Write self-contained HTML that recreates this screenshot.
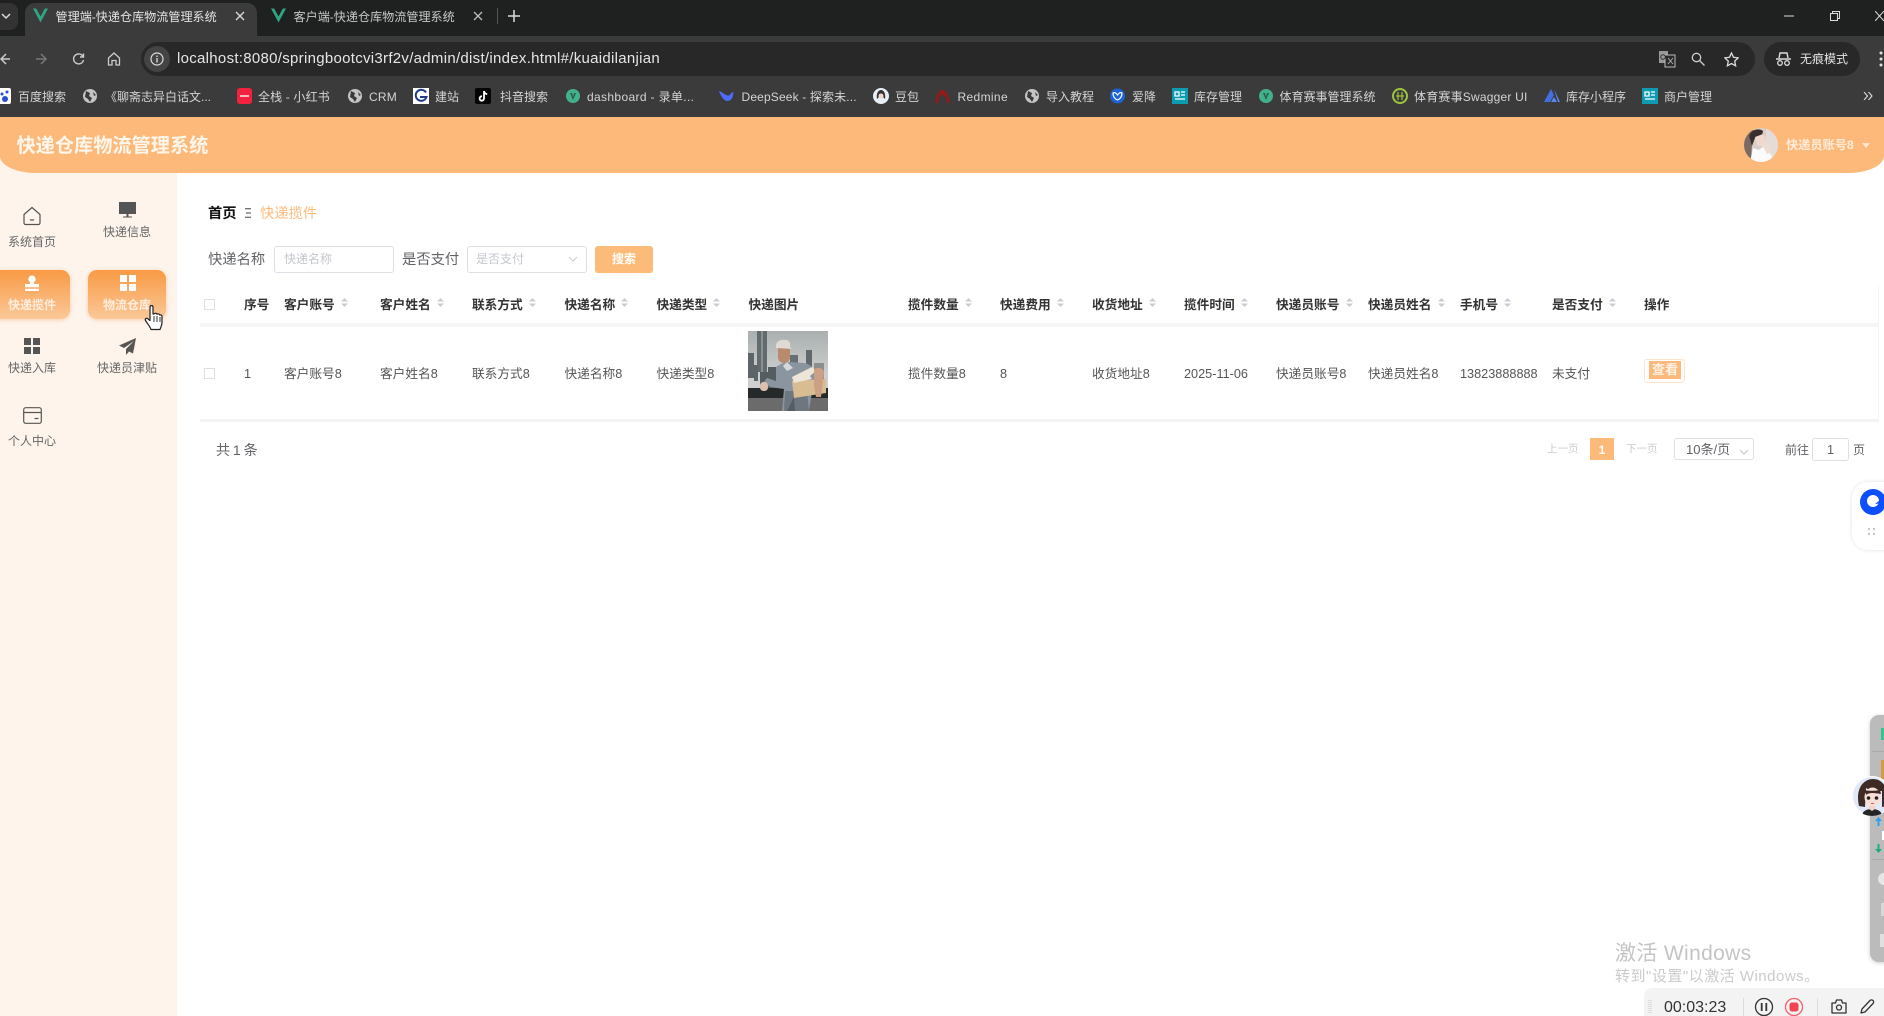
<!DOCTYPE html>
<html lang="zh"><head><meta charset="utf-8"><title>快递仓库物流管理系统</title>
<style>
html,body{margin:0;padding:0;width:1884px;height:1016px;overflow:hidden;background:#fff}
body{position:relative;font-family:"Liberation Sans","Noto Sans CJK SC",sans-serif;color:#606266}
#w{position:absolute;left:0;top:0;width:1884px;height:1016px;overflow:hidden;filter:blur(.3px)}
.a,.t,svg{position:absolute}
.t{white-space:nowrap;line-height:20px;height:20px}
.c{text-align:center}
.bm{font-size:12px;color:#d4d4d4;top:86.500px}
.tb{font-size:12.700px;font-weight:700;color:#333;top:294.500px}
.td{font-size:12.700px;color:#555;top:363.500px}
.nav{font-size:12px;color:#666;width:90px;text-align:center}
.act{background:linear-gradient(180deg,#f89a44,#fbc898);border-radius:9px;box-shadow:0 1px 4px rgba(245,160,90,.45)}
.box{background:#fff;border:1px solid #dcdfe6;border-radius:3px;box-sizing:border-box}
.cb{width:11px;height:11px;border:1px solid #dcdfe6;box-sizing:border-box;background:#fff}
</style></head><body><div id="w">

<!-- browser chrome -->
<div class="a" style="left:0;top:0;width:1884px;height:36px;background:#1f2020"></div>
<div class="a" style="left:0;top:36px;width:1884px;height:81px;background:#3b3b3b"></div>
<div class="a" style="left:0;top:3px;width:18px;height:27px;background:#333;border-radius:0 8px 8px 0"></div>
<svg style="left:1px;top:12px" width="10" height="8" viewBox="0 0 10 8"><path d="M1 2l4 4 4-4" fill="none" stroke="#ddd" stroke-width="1.5"/></svg>
<div class="a" style="left:25px;top:3px;width:232px;height:33px;background:#3b3b3b;border-radius:10px 10px 0 0"></div>
<svg style="left:33px;top:8px" width="15" height="15" viewBox="0 0 16 15"><path d="M0 0h3.400L8 8.500 12.600 0H16L8 15z" fill="#2fa583"/></svg>
<div class="t" style="left:55.500px;top:7px;font-size:12.100px;color:#e4e4e4">管理端-快递仓库物流管理系统</div>
<svg style="left:235px;top:11px" width="10" height="10" viewBox="0 0 10 10"><path d="M1 1l8 8M9 1l-8 8" stroke="#ddd" stroke-width="1.300"/></svg>
<svg style="left:271px;top:8px" width="15" height="15" viewBox="0 0 16 15"><path d="M0 0h3.400L8 8.500 12.600 0H16L8 15z" fill="#2fa583"/></svg>
<div class="t" style="left:293.500px;top:7px;font-size:12.100px;color:#c8c8c8">客户端-快递仓库物流管理系统</div>
<svg style="left:473px;top:11px" width="10" height="10" viewBox="0 0 10 10"><path d="M1 1l8 8M9 1l-8 8" stroke="#bbb" stroke-width="1.300"/></svg>
<div class="a" style="left:497px;top:8px;width:1px;height:16px;background:#555"></div>
<svg style="left:508px;top:10px" width="12" height="12" viewBox="0 0 12 12"><path d="M6 0v12M0 6h12" stroke="#ddd" stroke-width="1.500"/></svg>
<svg style="left:1784px;top:15px" width="10" height="2"><path d="M0 1h10" stroke="#ddd"/></svg>
<svg style="left:1830px;top:11px" width="10" height="10" viewBox="0 0 10 10"><path d="M.5 2.500h7v7h-7zM2.500 2.500v-2h7v7h-2" fill="none" stroke="#ddd"/></svg>
<svg style="left:1875px;top:11px" width="9" height="10" viewBox="0 0 9 10"><path d="M0 0l9 10M9 0L0 10" stroke="#ddd"/></svg>

<!-- toolbar -->
<svg style="left:0;top:52px" width="12" height="14" viewBox="0 0 12 14"><path d="M10 7H1M6 2L1 7l5 5" fill="none" stroke="#ccc" stroke-width="1.500"/></svg>
<svg style="left:36px;top:52px" width="12" height="14" viewBox="0 0 12 14"><path d="M0 7h10M5 2l5 5-5 5" fill="none" stroke="#777" stroke-width="1.500"/></svg>
<svg style="left:71.500px;top:52px" width="13" height="14" viewBox="0 0 13 14"><path d="M11 4.500A5 5 0 1 0 11.500 8M11.500 1.500v3.500H8" fill="none" stroke="#ccc" stroke-width="1.400"/></svg>
<svg style="left:107px;top:52px" width="14" height="14" viewBox="0 0 14 14"><path d="M1.500 6L7 1l5.500 5v7H9V8.500H5V13H1.500z" fill="none" stroke="#ccc" stroke-width="1.300"/></svg>
<div class="a" style="left:141px;top:42px;width:1614px;height:34px;background:#282828;border-radius:17px"></div>
<div class="a" style="left:144px;top:46px;width:26px;height:26px;background:#444;border-radius:50%"></div>
<svg style="left:150px;top:52px" width="14" height="14" viewBox="0 0 14 14"><circle cx="7" cy="7" r="6" fill="none" stroke="#ddd" stroke-width="1.200"/><path d="M7 6v4.500M7 3.500v1.500" stroke="#ddd" stroke-width="1.300"/></svg>
<div class="t" style="left:177px;top:48px;font-size:15px;letter-spacing:.29px;line-height:22px;height:22px;color:#e6e6e6">localhost:8080/springbootcvi3rf2v/admin/dist/index.html#/kuaidilanjian</div>
<svg style="left:1659px;top:50px" width="17" height="18" viewBox="0 0 17 18"><path d="M0 1h9v12H0z" fill="#999"/><path d="M6 5h10v12H6z" fill="#2a2a2a" stroke="#bbb"/><path d="M9 8l5 6M14 8l-5 6" stroke="#bbb" stroke-width=".8"/><circle cx="4" cy="7" r="2.300" fill="none" stroke="#333"/></svg>
<svg style="left:1691px;top:52px" width="14" height="14" viewBox="0 0 14 14"><circle cx="5.500" cy="5.500" r="4.200" fill="none" stroke="#ccc" stroke-width="1.300"/><path d="M8.500 8.500l5 5" stroke="#ccc" stroke-width="1.300"/></svg>
<svg style="left:1724px;top:52px" width="15" height="15" viewBox="0 0 15 15"><path d="M7.500 1l2 4.300 4.700.6-3.500 3.200.9 4.700-4.100-2.300-4.100 2.300.9-4.700L.8 5.900l4.700-.6z" fill="none" stroke="#ddd" stroke-width="1.300"/></svg>
<div class="a" style="left:1764px;top:42px;width:96px;height:34px;background:#282828;border-radius:17px"></div>
<svg style="left:1776px;top:52px" width="15" height="14" viewBox="0 0 15 14"><path d="M0 7h15M3 6l1-5h7l1 5" fill="none" stroke="#ddd" stroke-width="1.400"/><circle cx="4" cy="11" r="2.300" fill="none" stroke="#ddd" stroke-width="1.300"/><circle cx="11" cy="11" r="2.300" fill="none" stroke="#ddd" stroke-width="1.300"/></svg>
<div class="t" style="left:1800px;top:49px;font-size:12px;color:#e4e4e4">无痕模式</div>
<svg style="left:1879px;top:51px" width="5" height="16" viewBox="0 0 5 16"><circle cx="2" cy="2" r="1.500" fill="#ddd"/><circle cx="2" cy="8" r="1.500" fill="#ddd"/><circle cx="2" cy="14" r="1.500" fill="#ddd"/></svg>

<!-- bookmarks -->
<svg style="left:0;top:88px" width="11" height="16" viewBox="0 0 11 16"><rect x="-5" width="16" height="16" rx="2" fill="#fff"/><circle cx="5" cy="11" r="3" fill="#2b4fd0"/><circle cx="2" cy="6" r="1.500" fill="#2b4fd0"/><circle cx="7" cy="4" r="1.500" fill="#2b4fd0"/></svg>
<div class="t bm" style="left:18px">百度搜索</div>
<svg style="left:83px;top:89px" width="14" height="14" viewBox="0 0 14 14"><circle cx="7" cy="7" r="7" fill="#c4c4c4"/><path d="M3 2l4 2-1 3 3 2-2 4-2-3-3-2zM10 3l3 3-2 1z" fill="#3b3b3b"/></svg>
<div class="t bm" style="left:105px">《聊斋志异白话文...</div>
<div class="a" style="left:237px;top:88px;width:15px;height:16px;background:#f2213f;border-radius:3px"></div>
<div class="a" style="left:240px;top:95px;width:9px;height:2px;background:#f9b9c3"></div>
<div class="t bm" style="left:258px;letter-spacing:.15px">全栈 - 小红书</div>
<svg style="left:348px;top:89px" width="14" height="14" viewBox="0 0 14 14"><circle cx="7" cy="7" r="7" fill="#c4c4c4"/><path d="M3 2l4 2-1 3 3 2-2 4-2-3-3-2zM10 3l3 3-2 1z" fill="#3b3b3b"/></svg>
<div class="t bm" style="left:369px;letter-spacing:.2px">CRM</div>
<svg style="left:413px;top:88px" width="16" height="16" viewBox="0 0 16 16"><rect width="16" height="16" fill="#fff"/><path d="M13 4.500A5.500 5.500 0 1 0 13.500 9H7" fill="none" stroke="#223a8a" stroke-width="2"/></svg>
<div class="t bm" style="left:435px">建站</div>
<svg style="left:475px;top:88px" width="16" height="16" viewBox="0 0 16 16"><rect width="16" height="16" rx="2" fill="#050505"/><path d="M9 3v7.500a2.200 2.200 0 1 1-2-2.200M9 3c.4 2 1.500 3 3.200 3.200" fill="none" stroke="#fff" stroke-width="1.800"/></svg>
<div class="t bm" style="left:500px">抖音搜索</div>
<svg style="left:566px;top:89px" width="14" height="14" viewBox="0 0 14 14"><circle cx="7" cy="7" r="7" fill="#42b08b"/><path d="M4 4h2l1 4 1-4h2l-3 7z" fill="#2d5c4d"/></svg>
<div class="t bm" style="left:587px;letter-spacing:.35px">dashboard - 录单...</div>
<svg style="left:719px;top:89px" width="15" height="14" viewBox="0 0 15 14"><path d="M0 2c2 5 4 9 8 10 4 0 6-3 6-7l1-2-3 1C11 7 9 7 7 6 5 5 3 3 0 2z" fill="#4d6bfe"/><circle cx="10" cy="5" r="1" fill="#3b3b3b"/></svg>
<div class="t bm" style="left:741.500px;letter-spacing:.15px">DeepSeek - 探索未...</div>
<svg style="left:873px;top:88px" width="16" height="16" viewBox="0 0 16 16"><circle cx="8" cy="8" r="8" fill="#e8eef7"/><path d="M4 11c-1-5 1-9 4-9s5 4 4 9l-2-2V6H6v3z" fill="#333"/><circle cx="8" cy="8" r="2.500" fill="#f4d6c6"/></svg>
<div class="t bm" style="left:895px">豆包</div>
<svg style="left:934px;top:89px" width="17" height="14" viewBox="0 0 17 14"><path d="M1 14C2 6 5 1 8.500 1S15 6 16 14h-3C12 9 11 6 8.500 6S5 9 4 14z" fill="#8e1c1c"/></svg>
<div class="t bm" style="left:957.500px;letter-spacing:.35px">Redmine</div>
<svg style="left:1024.500px;top:89px" width="14" height="14" viewBox="0 0 14 14"><circle cx="7" cy="7" r="7" fill="#c4c4c4"/><path d="M3 2l4 2-1 3 3 2-2 4-2-3-3-2zM10 3l3 3-2 1z" fill="#3b3b3b"/></svg>
<div class="t bm" style="left:1046px">导入教程</div>
<svg style="left:1110px;top:88px" width="15" height="16" viewBox="0 0 15 16"><circle cx="7.500" cy="8" r="7.500" fill="#1c63d8"/><path d="M3 5c2-1 3 0 4.500 2C9 5 10 4 12 5c0 4-2 6-4.500 7C5 11 3 9 3 5z" fill="none" stroke="#fff" stroke-width="1.200"/></svg>
<div class="t bm" style="left:1132px">爱降</div>
<svg style="left:1172px;top:88px" width="16" height="16" viewBox="0 0 16 16"><rect width="16" height="16" fill="#0d9bb0"/><path d="M3 4h4v4H3zM9 4h4M9 7h4M3 11h10" fill="none" stroke="#fff" stroke-width="1.300"/></svg>
<div class="t bm" style="left:1194px">库存管理</div>
<svg style="left:1259px;top:89px" width="14" height="14" viewBox="0 0 14 14"><circle cx="7" cy="7" r="7" fill="#42b08b"/><path d="M4 4h2l1 4 1-4h2l-3 7z" fill="#2d5c4d"/></svg>
<div class="t bm" style="left:1279.500px">体育赛事管理系统</div>
<svg style="left:1392px;top:88px" width="16" height="16" viewBox="0 0 16 16"><circle cx="8" cy="8" r="7" fill="#3b3b3b" stroke="#9bc53d" stroke-width="2"/><path d="M6 4v8M10 4v8M4 8h8" stroke="#9bc53d" stroke-width="1.200"/></svg>
<div class="t bm" style="left:1414px;letter-spacing:.2px">体育赛事Swagger UI</div>
<svg style="left:1544px;top:89px" width="16" height="13" viewBox="0 0 16 13"><path d="M0 13L7 0l3 6-4 7z" fill="#3f6fe0"/><path d="M7 13l3-5 3 5zM10 0l6 13h-2z" fill="#5a8af0"/></svg>
<div class="t bm" style="left:1566px">库存小程序</div>
<svg style="left:1642px;top:88px" width="16" height="16" viewBox="0 0 16 16"><rect width="16" height="16" fill="#0d9bb0"/><path d="M3 4h4v4H3zM9 4h4M9 7h4M3 11h10" fill="none" stroke="#fff" stroke-width="1.300"/></svg>
<div class="t bm" style="left:1664px">商户管理</div>
<svg style="left:1863px;top:92px" width="10" height="8" viewBox="0 0 10 8"><path d="M1 0l3.500 4L1 8M5.500 0L9 4 5.500 8" fill="none" stroke="#ddd" stroke-width="1.100"/></svg>

<!-- sidebar -->
<div class="a" style="left:0;top:117px;width:177px;height:899px;background:#fef4ec"></div>
<!-- header -->
<div class="a" style="left:0;top:117px;width:1884px;height:56px;background:#fdb979;border-radius:0 0 36px 36px / 0 0 17px 17px"></div>
<div class="t" style="left:16.500px;top:134.500px;font-size:19.200px;font-weight:700;line-height:24px;height:24px;color:#fff6ec">快递仓库物流管理系统</div>
<svg style="left:1744px;top:128px" width="34" height="34" viewBox="0 0 34 34"><defs><clipPath id="av"><circle cx="17" cy="17" r="17"/></clipPath></defs><g clip-path="url(#av)"><rect width="34" height="34" fill="#d9cfc8"/><rect x="22" width="12" height="34" fill="#e4dcd6"/><path d="M0 8L5 2l5 0-2 14-1 18H0z" fill="#7b6a62"/><path d="M5 8C8 1 15 0 19 3l-1 5-7 2-3 8z" fill="#3a2f2c"/><path d="M11 9l8-3 4 7-3 6-7-2z" fill="#efd8cd"/><path d="M6 34l3-14 6 2 5-4 8 10-2 6z" fill="#fbfbfb"/><path d="M17 15l9 1 2 8-5 2z" fill="#ecdcd2"/></g></svg>
<div class="t" style="left:1786px;top:135px;font-size:12.200px;font-weight:700;color:#fff;opacity:.72">快递员账号8</div>
<svg style="left:1862px;top:143px" width="8" height="5"><path d="M0 0h8L4 5z" fill="#fde6d0"/></svg>

<!-- sidebar nav -->
<div class="a act" style="left:-8px;top:269.500px;width:78px;height:49px"></div>
<div class="a act" style="left:88px;top:269.500px;width:78px;height:49px"></div>

<svg style="left:22px;top:206px" width="20" height="20" viewBox="0 0 20 20"><path d="M2 8.500L10 1.500l8 7V17a1.500 1.500 0 0 1-1.500 1.500h-13A1.500 1.500 0 0 1 2 17z" fill="none" stroke="#555" stroke-width="1.200" stroke-linejoin="round"/><path d="M8 13.500c1 .8 3 .8 4 0" fill="none" stroke="#555" stroke-width="1.200"/></svg>
<div class="t nav" style="left:-13px;top:232px">系统首页</div>
<svg style="left:119px;top:202px" width="17" height="16" viewBox="0 0 17 16"><path d="M0 0h17v12H0z" fill="#555"/><path d="M7.500 12h2v2.500H13v1H4v-1h3.500z" fill="#555"/></svg>
<div class="t nav" style="left:82px;top:222px">快递信息</div>

<svg style="left:24px;top:275px" width="16" height="16" viewBox="0 0 16 16"><path d="M8 .5a3.600 3.600 0 0 1 2.300 6.400c-.5.400-.6 1.200-.4 2.100h5.100v3.300H1V9h5.100c.2-.9.100-1.700-.4-2.100A3.600 3.600 0 0 1 8 .5zM1 13.800h14V16H1z" fill="#fff"/></svg>
<div class="t nav" style="left:-13px;top:294.500px;color:#fff;font-weight:700;opacity:.75">快递揽件</div>
<svg style="left:120px;top:275px" width="16" height="16" viewBox="0 0 16 16"><path d="M0 0h7v7H0zM9 0h7v7H9zM0 9h7v7H0zM9 9h7v7H9z" fill="#fff"/></svg>
<div class="t nav" style="left:82px;top:294.500px;color:#fff;font-weight:700;opacity:.75">物流仓库</div>

<svg style="left:24px;top:338px" width="16" height="16" viewBox="0 0 16 16"><path d="M0 0h7v7H0zM9 0h7v7H9zM0 9h7v7H0zM9 9h7v7H9z" fill="#555"/></svg>
<div class="t nav" style="left:-13px;top:358px">快递入库</div>
<svg style="left:119px;top:338px" width="17" height="17" viewBox="0 0 17 17"><path d="M17 0L0 7.500l5 2.500L15 3 7 11v6l3-3.500 4 2z" fill="#555"/></svg>
<div class="t nav" style="left:82px;top:358px">快递员津贴</div>

<svg style="left:22.500px;top:407px" width="19" height="17" viewBox="0 0 19 17"><rect x=".7" y=".7" width="17.600" height="15.600" rx="2" fill="none" stroke="#555" stroke-width="1.200"/><path d="M.7 5.500h17.600M11.500 11.500h4" stroke="#555" stroke-width="1.200"/></svg>
<div class="t nav" style="left:-13px;top:431px">个人中心</div>

<!-- cursor -->
<svg style="left:144px;top:305px" width="20" height="27" viewBox="0 0 20 27"><path d="M6 2c0-2 3-2 3 0v7l1 0c1-1 2.500-1 3 .2 1-.6 2.300-.3 2.700.8 1-.4 2.300 0 2.300 1.500v6c0 3-1 4-2 7H7c-1-3-3-5-5.500-9-.8-1.300.7-2.800 2-2L6 15.500z" fill="#fff" stroke="#222" stroke-width="1.200" stroke-linejoin="round"/><path d="M10 11v6M13 11v6M16 12v5" stroke="#222" stroke-width=".9"/></svg>

<!-- breadcrumb -->
<div class="t" style="left:208px;top:204px;font-size:14.300px;font-weight:700;color:#111">首页</div>
<svg style="left:245px;top:208px" width="7" height="10" viewBox="0 0 7 10"><path d="M0 .7h6M1 5h5M0 9.300h6" stroke="#444" stroke-width="1"/></svg>
<div class="t" style="left:260px;top:204px;font-size:14.300px;color:#fbbb7a">快递揽件</div>

<!-- search -->
<div class="t" style="left:208px;top:249.500px;font-size:14.300px;color:#606266">快递名称</div>
<div class="a box" style="left:274px;top:246px;width:120px;height:27px"></div>
<div class="t" style="left:284px;top:248.500px;font-size:12px;color:#c4c7ce">快递名称</div>
<div class="t" style="left:402px;top:249.500px;font-size:14.300px;color:#606266">是否支付</div>
<div class="a box" style="left:467px;top:246px;width:120px;height:27px"></div>
<div class="t" style="left:476px;top:248.500px;font-size:12px;color:#c4c7ce">是否支付</div>
<svg style="left:568px;top:256px" width="10" height="6" viewBox="0 0 10 6"><path d="M1 1l4 4 4-4" fill="none" stroke="#c8ccd3" stroke-width="1"/></svg>
<div class="a" style="left:595px;top:246px;width:58px;height:27px;background:#fcbb78;border-radius:3px"></div>
<div class="t c" style="left:595px;top:248.500px;width:58px;font-size:12px;font-weight:700;color:#fff">搜索</div>

<!-- table -->
<div class="a" style="left:200px;top:323px;width:1679px;height:4px;background:#f6f6f6"></div>
<div class="a" style="left:200px;top:418.500px;width:1679px;height:3px;background:#f3f3f3"></div>
<div class="a" style="left:1878px;top:285px;width:1px;height:136px;background:#f5f5f5"></div>
<div class="a cb" style="left:204px;top:299px"></div>
<div class="a cb" style="left:204px;top:368px"></div>

<div class="t tb" style="left:244px">序号</div>
<div class="t tb" style="left:284px">客户账号</div>
<div class="t tb" style="left:380px">客户姓名</div>
<div class="t tb" style="left:472px">联系方式</div>
<div class="t tb" style="left:564.500px">快递名称</div>
<div class="t tb" style="left:656.500px">快递类型</div>
<div class="t tb" style="left:748.500px">快递图片</div>
<div class="t tb" style="left:908px">揽件数量</div>
<div class="t tb" style="left:1000px">快递费用</div>
<div class="t tb" style="left:1092px">收货地址</div>
<div class="t tb" style="left:1184px">揽件时间</div>
<div class="t tb" style="left:1276px">快递员账号</div>
<div class="t tb" style="left:1368px">快递员姓名</div>
<div class="t tb" style="left:1460px">手机号</div>
<div class="t tb" style="left:1552px">是否支付</div>
<div class="t tb" style="left:1644px">操作</div>

<svg style="left:341px;top:298px" width="7" height="9"><path d="M3.500 0L7 3.500H0zM3.500 9L0 5.500h7z" fill="#c8ccd3"/></svg>
<svg style="left:437px;top:298px" width="7" height="9"><path d="M3.500 0L7 3.500H0zM3.500 9L0 5.500h7z" fill="#c8ccd3"/></svg>
<svg style="left:529px;top:298px" width="7" height="9"><path d="M3.500 0L7 3.500H0zM3.500 9L0 5.500h7z" fill="#c8ccd3"/></svg>
<svg style="left:621px;top:298px" width="7" height="9"><path d="M3.500 0L7 3.500H0zM3.500 9L0 5.500h7z" fill="#c8ccd3"/></svg>
<svg style="left:713px;top:298px" width="7" height="9"><path d="M3.500 0L7 3.500H0zM3.500 9L0 5.500h7z" fill="#c8ccd3"/></svg>
<svg style="left:965px;top:298px" width="7" height="9"><path d="M3.500 0L7 3.500H0zM3.500 9L0 5.500h7z" fill="#c8ccd3"/></svg>
<svg style="left:1057px;top:298px" width="7" height="9"><path d="M3.500 0L7 3.500H0zM3.500 9L0 5.500h7z" fill="#c8ccd3"/></svg>
<svg style="left:1149px;top:298px" width="7" height="9"><path d="M3.500 0L7 3.500H0zM3.500 9L0 5.500h7z" fill="#c8ccd3"/></svg>
<svg style="left:1241px;top:298px" width="7" height="9"><path d="M3.500 0L7 3.500H0zM3.500 9L0 5.500h7z" fill="#c8ccd3"/></svg>
<svg style="left:1346px;top:298px" width="7" height="9"><path d="M3.500 0L7 3.500H0zM3.500 9L0 5.500h7z" fill="#c8ccd3"/></svg>
<svg style="left:1438px;top:298px" width="7" height="9"><path d="M3.500 0L7 3.500H0zM3.500 9L0 5.500h7z" fill="#c8ccd3"/></svg>
<svg style="left:1504px;top:298px" width="7" height="9"><path d="M3.500 0L7 3.500H0zM3.500 9L0 5.500h7z" fill="#c8ccd3"/></svg>
<svg style="left:1609px;top:298px" width="7" height="9"><path d="M3.500 0L7 3.500H0zM3.500 9L0 5.500h7z" fill="#c8ccd3"/></svg>

<div class="t td" style="left:244px">1</div>
<div class="t td" style="left:284px">客户账号8</div>
<div class="t td" style="left:380px">客户姓名8</div>
<div class="t td" style="left:472px">联系方式8</div>
<div class="t td" style="left:564.500px">快递名称8</div>
<div class="t td" style="left:656.500px">快递类型8</div>
<div class="t td" style="left:908px">揽件数量8</div>
<div class="t td" style="left:1000px">8</div>
<div class="t td" style="left:1092px">收货地址8</div>
<div class="t td" style="left:1184px">2025-11-06</div>
<div class="t td" style="left:1276px">快递员账号8</div>
<div class="t td" style="left:1368px">快递员姓名8</div>
<div class="t td" style="left:1460px">13823888888</div>
<div class="t td" style="left:1552px">未支付</div>

<!-- photo -->
<svg style="left:748px;top:331px" width="80" height="80" viewBox="0 0 80 80">
<defs><linearGradient id="sky" x1="0" y1="0" x2="0" y2="1"><stop offset="0" stop-color="#a9afaf"/><stop offset=".55" stop-color="#cdd0cf"/></linearGradient></defs>
<rect width="80" height="80" fill="url(#sky)"/>
<path d="M9 0h10v41H9z" fill="#626b6e"/><path d="M13 0h2v41h-2z" fill="#89928f"/>
<path d="M0 22h6v25H0zM6 34h4v16H6z" fill="#5d6568"/>
<path d="M12 41h17v18H12zM20 36h8v10h-8z" fill="#565d60"/>
<path d="M42 24h8v26h-8z" fill="#686f72"/><path d="M58 19h6v22h-6z" fill="#5f686b"/><path d="M66 32h10v18H66z" fill="#8a8f8e"/>
<rect y="57" width="80" height="10" fill="#26292a"/><rect y="67" width="80" height="13" fill="#6a6b6a"/>
<path d="M28 36c6-4 10-5 14-5l14 1c6 1 10 5 11 10l-6 38H34l2-22-14-2-6-5 3-4 9 3z" fill="#8b95a0"/>
<path d="M36 80l1-20h22l2 20z" fill="#6e7680"/>
<path d="M39 31l6 6-6 3-4-5z" fill="#d5d8da"/>
<path d="M30 17h12v9c0 4-3 6-6 6s-6-2-6-6z" fill="#b98a6e"/>
<path d="M28 14c0-4 6-6 10-5 3 0 5 3 4 7l2 2-16-1z" fill="#dedad5"/>
<rect x="12" y="51" width="8" height="9" rx="3.500" fill="#dcbfad"/>
<path d="M44 50l34-2v14l-32 5z" fill="#d8bc93"/><path d="M44 46l20-10 4 4-6 5 2 3-18 4z" fill="#ece5d8"/>
<path d="M66 38c5-2 10-1 10 4l-3 24h-5l-2-12z" fill="#cba085"/>
<path d="M46 66l1 14h-8z" fill="#565c63"/>
</svg>

<!-- action -->
<div class="a" style="left:1644px;top:359px;width:41px;height:24px;background:#fff;border:1px solid #fde3c9;border-radius:3px;box-sizing:border-box"></div>
<div class="a" style="left:1649px;top:361px;width:32px;height:18px;background:#fbb97b"></div>
<div class="t c" style="left:1649px;top:360px;width:32px;font-size:13px;font-weight:700;color:#fff;opacity:.8">查看</div>

<!-- pagination -->
<div class="t" style="left:216px;top:439.500px;font-size:14px;color:#606266;word-spacing:-1px">共 1 条</div>
<div class="t" style="left:1547px;top:438.500px;font-size:10.500px;color:#c8cbd1">上一页</div>
<div class="a" style="left:1590px;top:438px;width:24px;height:22px;background:#fcb978"></div>
<div class="t c" style="left:1590px;top:439.500px;width:24px;font-size:12px;font-weight:700;color:#fff">1</div>
<div class="t" style="left:1626px;top:438.500px;font-size:10.500px;color:#c8cbd1">下一页</div>
<div class="a box" style="left:1674px;top:438px;width:80px;height:22px"></div>
<div class="t" style="left:1686px;top:440px;font-size:13px;color:#606266">10条/页</div>
<svg style="left:1739px;top:449px" width="10" height="6" viewBox="0 0 10 6"><path d="M1 1l4 4 4-4" fill="none" stroke="#c0c4cc"/></svg>
<div class="t" style="left:1785px;top:439.500px;font-size:12px;color:#606266">前往</div>
<div class="a box" style="left:1812px;top:438px;width:37px;height:23px"></div>
<div class="t c" style="left:1812px;top:439.500px;width:37px;font-size:13px;color:#606266">1</div>
<div class="t" style="left:1853px;top:439.500px;font-size:12px;color:#606266">页</div>

<!-- floating widget -->
<div class="a" style="left:1852px;top:482px;width:40px;height:68px;background:#fff;border-radius:16px 0 0 16px;box-shadow:0 0 4px rgba(0,0,0,.12)"></div>
<svg style="left:1860px;top:489px" width="24" height="26" viewBox="0 0 24 26"><circle cx="13" cy="13" r="13" fill="#0d4fff"/><circle cx="13" cy="12" r="6" fill="#fff"/><path d="M15 15l9-1v-6z" fill="#0d4fff"/></svg>
<svg style="left:1868px;top:528px" width="8" height="8"><g fill="#c4c4c4"><rect width="2" height="2"/><rect x="5" width="2" height="2"/><rect y="5" width="2" height="2"/><rect x="5" y="5" width="2" height="2"/></g></svg>

<!-- side gray panel -->
<div class="a" style="left:1870px;top:715px;width:20px;height:247px;background:#bbbbbb;border-radius:9px 0 0 9px;box-shadow:0 1px 4px rgba(0,0,0,.2)"></div>
<div class="a" style="left:1881px;top:728px;width:3px;height:12px;background:#35c38f"></div>
<div class="a" style="left:1872px;top:751px;width:12px;height:1px;background:#aaa"></div>
<div class="a" style="left:1881px;top:760px;width:3px;height:19px;background:#d69a45"></div>
<svg style="left:1852px;top:776px" width="32" height="40" viewBox="0 0 32 40"><defs><clipPath id="gl"><circle cx="20" cy="20" r="20"/></clipPath></defs><g clip-path="url(#gl)"><rect width="40" height="40" fill="#fff"/><circle cx="20" cy="20" r="19" fill="#dfe9fa"/><path d="M10 40c0-5 5-7 10-7s10 2 10 7z" fill="#252525"/><path d="M17 27h6v6l-3 2-3-2z" fill="#f3d2c4"/><path d="M7 30C3 12 12 3 21 3s17 8 13 27l-4 1V15c-6 0-13-1-16-3l-1 19z" fill="#3f2b25"/><ellipse cx="20.500" cy="21" rx="8" ry="9.500" fill="#f8dfd3"/><path d="M13 14c3 1 9 1 15 0l1 4c-6-1-12-2-15 1z" fill="#3f2b25"/><circle cx="16.500" cy="22" r="1.800" fill="#222"/><circle cx="24.500" cy="22" r="1.800" fill="#222"/><path d="M19 27.500h3" stroke="#d2595c" stroke-width="1"/></g></svg>
<svg style="left:1875px;top:817px" width="7" height="9"><path d="M3.500 0L7 4H4.500v5h-2V4H0z" fill="#2c9ff0"/></svg>
<div class="a" style="left:1882px;top:831px;width:2px;height:9px;background:#fff"></div>
<svg style="left:1875px;top:844px" width="7" height="9"><path d="M3.500 9L7 5H4.500V0h-2v5H0z" fill="#19b07e"/></svg>
<div class="a" style="left:1872px;top:859px;width:12px;height:1px;background:#aaa"></div>
<div class="a" style="left:1878px;top:873px;width:12px;height:12px;background:#e6e6e6;border-radius:50%"></div>
<div class="a" style="left:1881px;top:903px;width:3px;height:13px;background:#d8d8d8"></div>
<div class="a" style="left:1880px;top:934px;width:4px;height:13px;background:#e0e0e0"></div>

<!-- watermark -->
<div class="t" style="left:1615px;top:944px;font-size:21px;letter-spacing:.35px;color:#c4c4c4;line-height:20px">激活 Windows</div>
<div class="t" style="left:1615px;top:967px;font-size:15px;letter-spacing:.5px;color:#cbcbcb">转到"设置"以激活 Windows。</div>

<!-- recorder -->
<div class="a" style="left:1644px;top:988px;width:240px;height:28px;background:#f3f3f3;border-radius:8px 0 0 0"></div>
<div class="a" style="left:1648px;top:1000px;width:4px;height:14px;background:repeating-linear-gradient(#ddd 0 1px,#f3f3f3 1px 2px)"></div>
<div class="t" style="left:1664px;top:998px;font-size:16px;color:#333">00:03:23</div>
<div class="a" style="left:1743px;top:998px;width:1px;height:18px;background:#ddd"></div>
<svg style="left:1754px;top:997px" width="20" height="20" viewBox="0 0 20 20"><circle cx="10" cy="10" r="8.500" fill="none" stroke="#333" stroke-width="1.300"/><path d="M7.700 6v8M12.300 6v8" stroke="#333" stroke-width="1.800"/></svg>
<svg style="left:1784px;top:997px" width="20" height="20" viewBox="0 0 20 20"><circle cx="10" cy="10" r="8.500" fill="none" stroke="#f0636f" stroke-width="1.300"/><rect x="5.500" y="5.500" width="9" height="9" rx="2.500" fill="#f0444f"/></svg>
<div class="a" style="left:1817px;top:998px;width:1px;height:18px;background:#ddd"></div>
<svg style="left:1831px;top:999px" width="16" height="15" viewBox="0 0 16 15"><path d="M1 4h3.500l1-3h5l1 3H15v10H1z" fill="none" stroke="#333" stroke-width="1.300" stroke-linejoin="round"/><circle cx="8" cy="8.500" r="2.500" fill="none" stroke="#333" stroke-width="1.300"/></svg>
<svg style="left:1860px;top:999px" width="15" height="15" viewBox="0 0 15 15"><path d="M1 14l1-4 8-8.500a1.800 1.800 0 0 1 3 3L5 13z" fill="none" stroke="#333" stroke-width="1.300" stroke-linejoin="round"/></svg>

</div></body></html>
